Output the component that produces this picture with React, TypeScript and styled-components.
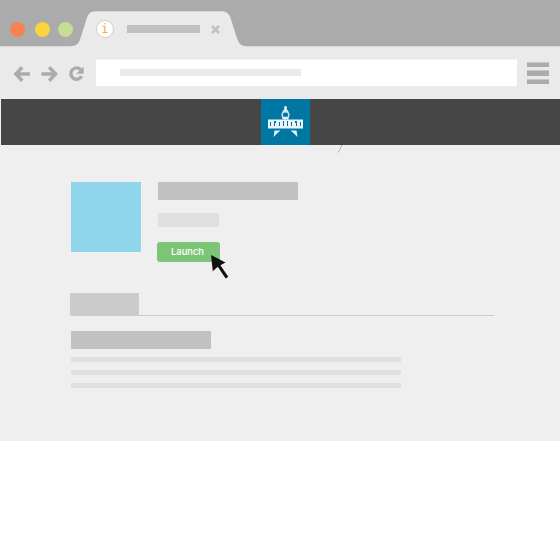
import React from "react";
import styled, { createGlobalStyle } from "styled-components";

const GlobalStyle = createGlobalStyle`
  * { box-sizing: border-box; }
  body { margin: 0; background: #fff; font-family: "Liberation Sans", Arial, sans-serif; }
  svg { display: block; flex: none; }
`;

const Browser = styled.div`
  width: 560px;
  height: 441px;
  background: #efefef;
`;

const TabStrip = styled.div`
  display: flex;
  height: 47px;
  background: #ababab;
  border-bottom: 1px solid #dadada;
`;

const WindowControls = styled.div`
  display: flex;
  gap: 8px;
  width: 71px;
  padding: 21.5px 0 0 9.5px;
`;

const Dot = styled.span<{ $color: string }>`
  flex: none;
  width: 15px;
  height: 15px;
  border-radius: 50%;
  background: ${(p) => p.$color};
  & + & { margin-left: 2px; }
  & + & + & { margin-left: 0; }
`;

const Tab = styled.div`
  position: relative;
  width: 176px;
  height: 47px;
  padding: 19px 0 0 24.5px;
`;

const TabShape = styled.svg`
  position: absolute;
  inset: 0;
`;

const TabContent = styled.div`
  position: relative;
  display: flex;
  align-items: center;
  height: 20px;
`;

const Favicon = styled.span`
  display: flex;
  align-items: center;
  justify-content: center;
  width: 18.5px;
  height: 18.5px;
  border: 1px solid #d0d0d0;
  border-radius: 50%;
  background: #fff;
  color: #fba92f;
  font: 12px/18px "DejaVu Sans Mono", monospace;
`;

const Bar = styled.div<{ $w: number; $h: number; $color: string; $radius?: number }>`
  flex: none;
  width: ${(p) => p.$w}px;
  height: ${(p) => p.$h}px;
  border-radius: ${(p) => p.$radius ?? 0}px;
  background: ${(p) => p.$color};
`;

const TabTitle = styled(Bar)`
  margin: 0 11px 0 13.4px;
`;

const Toolbar = styled.div`
  display: flex;
  height: 52px;
  padding: 12px 11px 0 13px;
  background: #eaeaea;
`;

const NavIcons = styled.div`
  display: flex;
  gap: 9.5px;
  width: 83px;
  padding-top: 6px;
`;

const AddressBar = styled.div`
  width: 420.5px;
  height: 27px;
  margin-right: 10.5px;
  padding: 9px 0 0 23.5px;
  background: #fff;
  border-top: 1px solid #f4f4f4;
`;

const Menu = styled.div`
  display: flex;
  flex-direction: column;
  gap: 3px;
  padding-top: 3px;
`;

const MenuLine = styled(Bar)`
  border-top: 1px solid #c6c6c6;
`;

const SiteHeader = styled.header`
  height: 46px;
  margin-left: 1px;
  padding-left: 260px;
  background: #464646;
`;

const Brand = styled.div`
  width: 49px;
  height: 46px;
  background: #0077a3;
`;

const Page = styled.main`
  position: relative;
  padding: 37px 0 0 70px;
`;

const Squiggle = styled.svg`
  position: absolute;
  left: 336px;
  top: 0;
`;

const AppSummary = styled.section`
  display: flex;
  gap: 16px;
  height: 111px;
  padding-left: 1px;
`;

const Details = styled.div`
  display: flex;
  flex-direction: column;
  padding-left: 1px;
`;

const Subtitle = styled(Bar)`
  margin: 13px 0 15px;
`;

const LaunchButton = styled.button`
  position: relative;
  width: 63px;
  height: 20px;
  margin-left: -1px;
  padding: 0 2px 0 0;
  border: 0;
  border-radius: 3px;
  background: #7cc576;
  color: #fff;
  font: 500 9.4px/20px Inter, "Liberation Sans", sans-serif;
`;

const Pointer = styled.svg`
  position: absolute;
  left: 53px;
  top: 12px;
  overflow: visible;
`;

const TabsRow = styled.div`
  width: 424px;
  height: 23px;
  background: linear-gradient(#cbcbcb, #cbcbcb) 1px 100% / 423px 1px no-repeat;
`;

const Description = styled.section`
  display: flex;
  flex-direction: column;
  gap: 8px;
  padding: 15px 0 0 1px;
`;

function BackIcon() {
  return (
    <svg width="18" height="18" viewBox="0 0 18 18" fill="none" stroke="#ababab" strokeWidth="3.5">
      <path d="M17 9H3M9.2 2.2L2.9 9l6.3 6.7" />
    </svg>
  );
}

function ForwardIcon() {
  return (
    <svg width="18" height="18" viewBox="0 0 18 18" fill="none" stroke="#ababab" strokeWidth="3.5">
      <path d="M0.5 9h14M8.2 2.2L14.5 9l-6.3 6.7" />
    </svg>
  );
}

function ReloadIcon() {
  return (
    <svg width="18" height="18" viewBox="0 0 18 18">
      <path d="M12.8 4.8A5.7 5.7 0 1 0 13.6 11.2" fill="none" stroke="#ababab" strokeWidth="3.4" />
      <path d="M15.6 1.4v7.4H8.4z" fill="#ababab" />
    </svg>
  );
}

function CapitolLogo() {
  return (
    <svg width="49" height="46" viewBox="0 0 49 46" fill="#e9f5fa">
      <path d="M23.2 11.5V7.8q1.3-1.6 2.6 0V11.5z" />
      <path d="M22.5 11h4l1.3 2.2h-6.6z" />
      <path d="M21.8 18.8q-2.2-5.8 2.7-6.2q4.9.4 2.7 6.2" fill="none" stroke="#c9e4ee" strokeWidth="1.5" />
      <rect x="21.5" y="17.8" width="6" height="2.7" />
      <rect x="7" y="20.5" width="35" height="9" />
      <path
        d="M9 23h1v4h-1zM13 22h2v2h-1v3h-1zM18 23h1v4h-1zM22 22h1v5h-1zM26 22h1v5h-1zM30 23h1v4h-1zM34 22h2v5h-1v-3h-1zM39 23h1v4h-1z"
        fill="#0077a3"
      />
      <path d="M13.5 31.5h6l-3 2.4-3.9 4.2zM29.5 31.5h6l1 6.6-4-4.2z" />
    </svg>
  );
}

export default function App() {
  return (
    <>
      <GlobalStyle />
      <Browser>
        <TabStrip>
          <WindowControls>
            <Dot $color="#f98050" />
            <Dot $color="#fbd33f" />
            <Dot $color="#c5dd95" />
          </WindowControls>
          <Tab>
            <TabShape width="176" height="47" viewBox="0 0 176 47">
              <path
                d="M0 47V46.3Q6.8 46 9 39.7L16 17.5Q18 11.3 24 11.3H151Q157 11.3 159.4 17.5L166.5 39.7Q169 46 175 46.3V47z"
                fill="#eaeaea"
              />
            </TabShape>
            <TabContent>
              <Favicon>i</Favicon>
              <TabTitle $w={73} $h={8} $color="#c1c1c1" />
              <svg width="9" height="9" viewBox="0 0 9 9" stroke="#c1c1c1" strokeWidth="2.6">
                <path d="M1 1l7 7M8 1L1 8" />
              </svg>
            </TabContent>
          </Tab>
        </TabStrip>
        <Toolbar>
          <NavIcons>
            <BackIcon />
            <ForwardIcon />
            <ReloadIcon />
          </NavIcons>
          <AddressBar>
            <Bar $w={181.5} $h={7} $color="#eaeaea" />
          </AddressBar>
          <Menu>
            <MenuLine $w={22} $h={5} $color="#ababab" />
            <MenuLine $w={22} $h={6} $color="#ababab" />
            <MenuLine $w={22} $h={5} $color="#ababab" />
          </Menu>
        </Toolbar>
        <SiteHeader>
          <Brand>
            <CapitolLogo />
          </Brand>
        </SiteHeader>
        <Page>
          <Squiggle width="8" height="9" viewBox="0 0 8 9" fill="none" stroke="#8c8c8c" strokeWidth="0.9">
            <path d="M5.7 0L5 2.5L2 8" strokeDasharray="1.8 1" />
          </Squiggle>
          <AppSummary>
            <Bar $w={70} $h={70} $color="#8fd5ec" />
            <Details>
              <Bar $w={140} $h={18} $color="#c1c1c1" />
              <Subtitle $w={61} $h={14} $color="#e0e0e0" $radius={1} />
              <LaunchButton>
                Launch
                <Pointer width="20" height="26" viewBox="0 0 20 26">
                  <path d="M1 1L15.5 8.5L10.4 11.2L18.3 22.8L15.6 24.6L7.8 12.8L2.8 17.2z" fill="#111" />
                </Pointer>
              </LaunchButton>
            </Details>
          </AppSummary>
          <TabsRow>
            <Bar $w={69} $h={22} $color="#cbcbcb" />
          </TabsRow>
          <Description>
            <Bar $w={140} $h={18} $color="#c1c1c1" />
            <Bar $w={330} $h={5} $color="#e0e0e0" />
            <Bar $w={330} $h={5} $color="#e0e0e0" />
            <Bar $w={330} $h={5} $color="#e0e0e0" />
          </Description>
        </Page>
      </Browser>
    </>
  );
}
